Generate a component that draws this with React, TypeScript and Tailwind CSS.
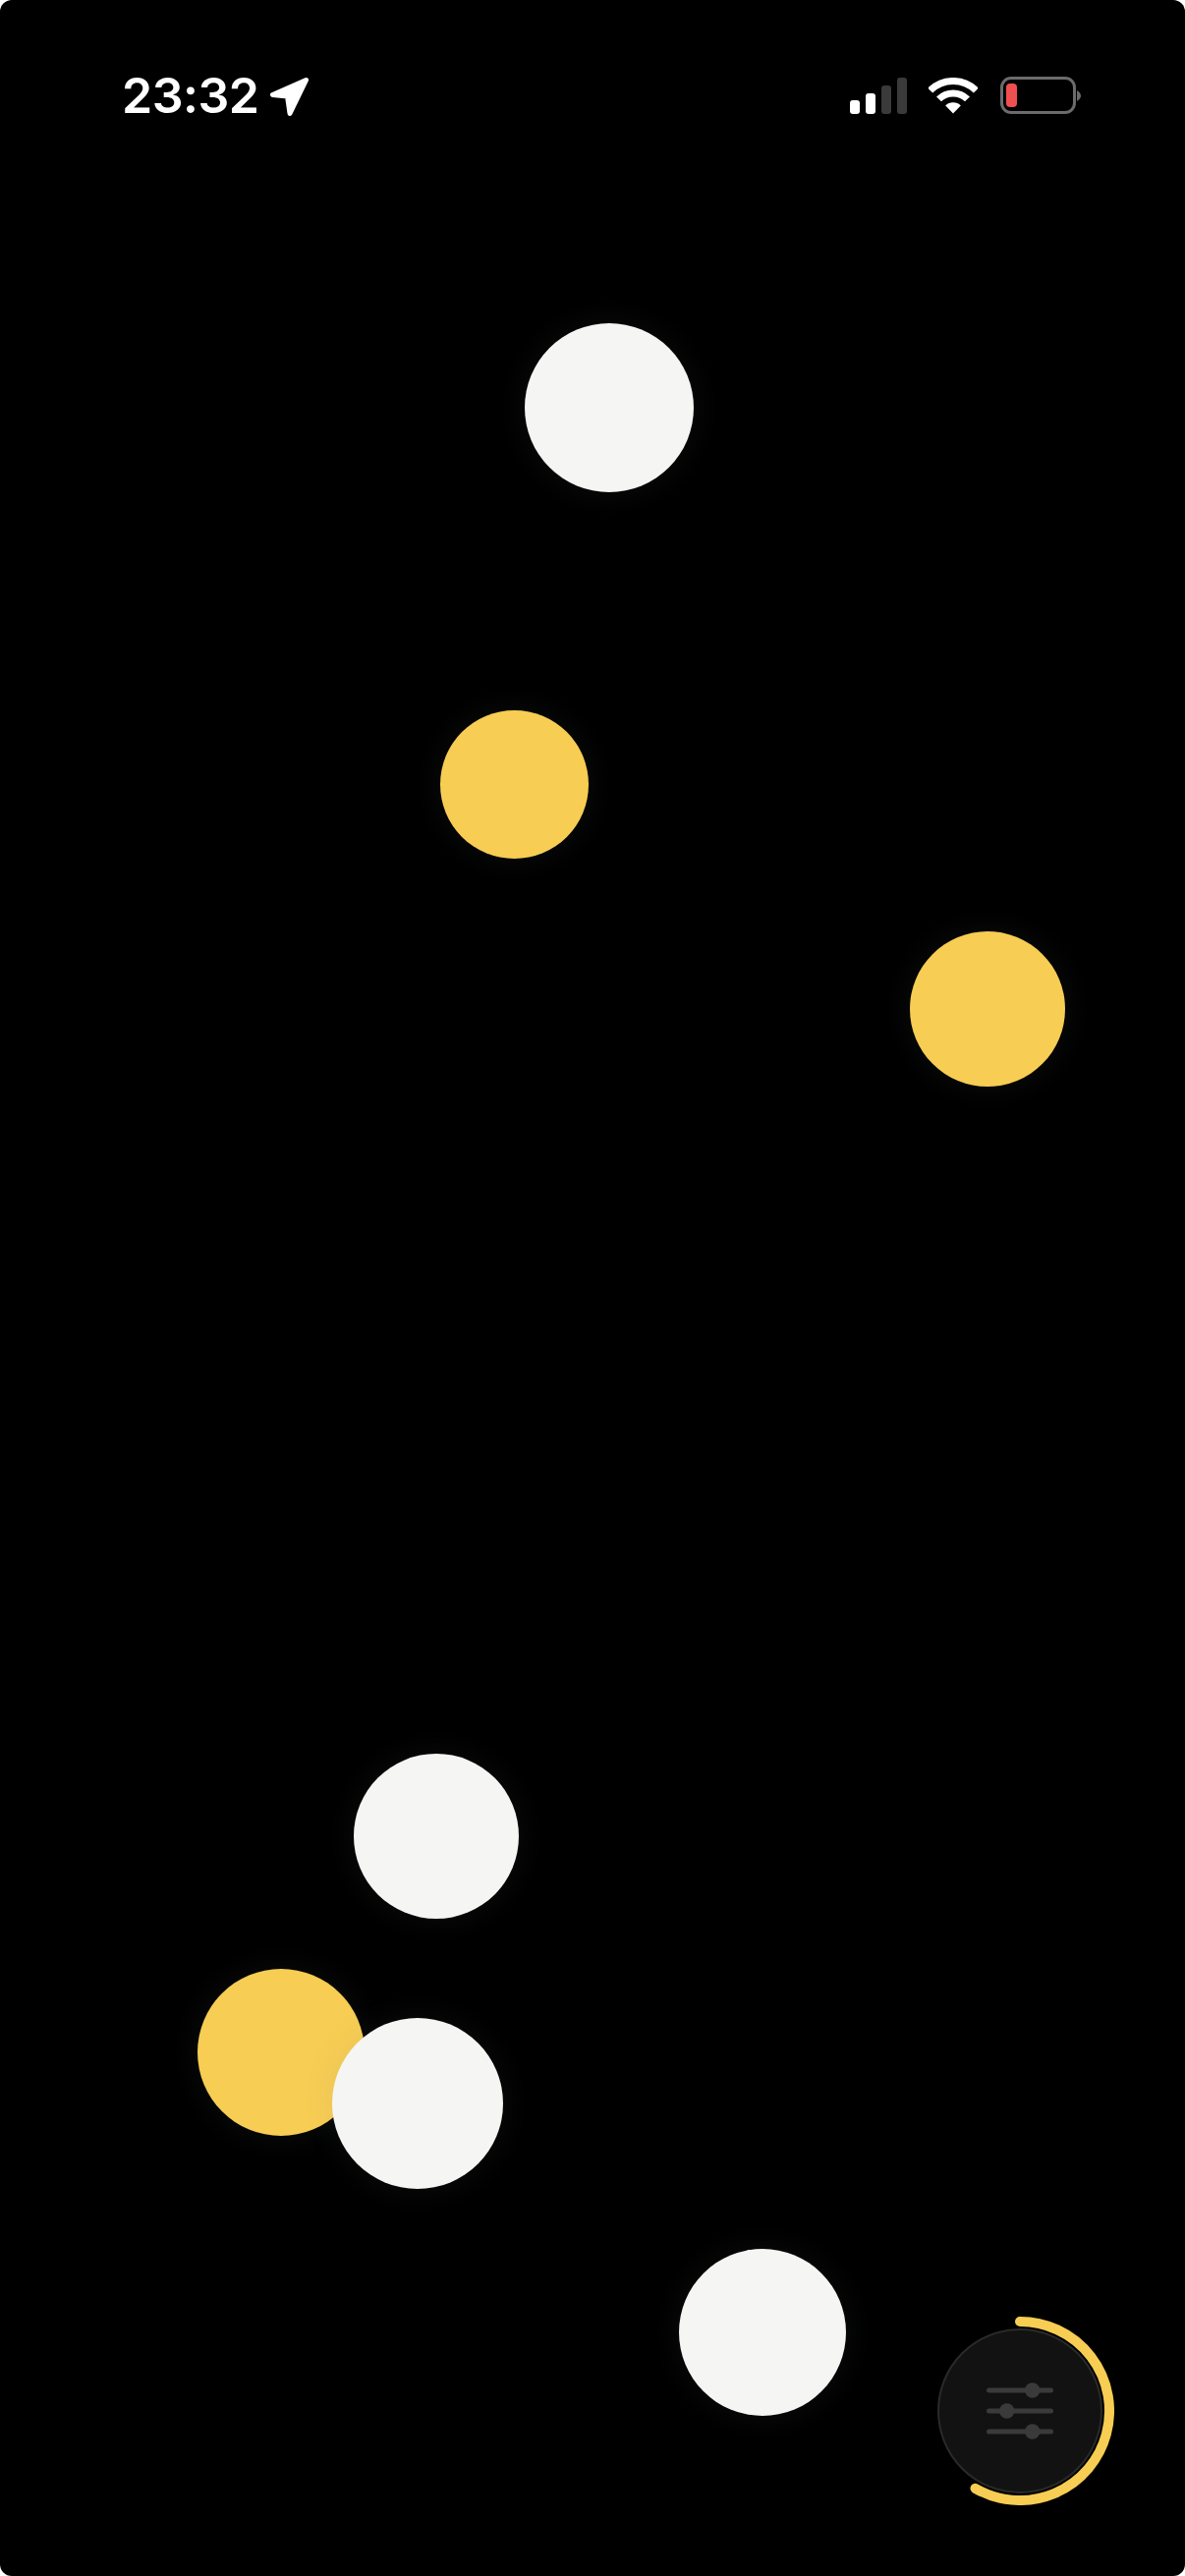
// App.tsx — floating dots screen with status bar and settings button
const DOTS = [
  { id: "w1", className: "left-[534px] top-[329px] h-[172px] w-[172px] bg-[#f5f5f3]" },
  { id: "y1", className: "left-[448px] top-[723px] h-[151px] w-[151px] bg-[#f7cd53]" },
  { id: "y2", className: "left-[926px] top-[948px] h-[158px] w-[158px] bg-[#f7cd53]" },
  { id: "w2", className: "left-[360px] top-[1785px] h-[168px] w-[168px] bg-[#f5f5f3]" },
  { id: "y3", className: "left-[201px] top-[2004px] h-[170px] w-[170px] bg-[#f7cd53]" },
  { id: "w3", className: "left-[338px] top-[2054px] h-[174px] w-[174px] bg-[#f5f5f3]" },
  { id: "w4", className: "left-[691px] top-[2289px] h-[170px] w-[170px] bg-[#f5f5f3]" },
];

function LocationArrow() {
  return (
    <svg width="39" height="39" viewBox="0 0 39 39" className="mt-px">
      <path
        d="M36.5 2.5 L2.5 17.5 L17.5 19 L20 36.5 Z"
        fill="#fff"
        stroke="#fff"
        strokeWidth="5"
        strokeLinejoin="round"
      />
    </svg>
  );
}

function Signal() {
  return (
    <div className="flex h-[37px] items-end gap-[6px]">
      <div className="h-[14px] w-[10px] rounded-[3px] bg-white" />
      <div className="h-[21px] w-[10px] rounded-[3px] bg-white" />
      <div className="h-[29px] w-[10px] rounded-[3px] bg-[#3a3a3a]" />
      <div className="h-[37px] w-[10px] rounded-[3px] bg-[#3a3a3a]" />
    </div>
  );
}

function Wifi() {
  return (
    <svg width="50" height="37" viewBox="0 0 50 37" fill="none">
      <path d="M1.7 13.1 A33 33 0 0 1 48.3 13.1" stroke="#fff" strokeWidth="7" />
      <path d="M10.5 21.9 A20.5 20.5 0 0 1 39.5 21.9" stroke="#fff" strokeWidth="7" />
      <path d="M25 36.4 L17.2 28.6 A11 11 0 0 1 32.8 28.6 Z" fill="#fff" />
    </svg>
  );
}

function Battery() {
  return (
    <div className="ml-px flex items-center gap-[1px]">
      <div className="flex h-[38px] w-[77px] items-center rounded-[11px] border-[3px] border-[#6b6b6b] pl-[3px]">
        <div className="h-[24px] w-[11px] rounded-[4px] bg-[#ef4f4f]" />
      </div>
      <svg width="4" height="11" viewBox="0 0 4 11">
        <path d="M0 0 C2.5 1.5 4 3.5 4 5.5 C4 7.5 2.5 9.5 0 11 Z" fill="#6b6b6b" />
      </svg>
    </div>
  );
}

function SettingsButton() {
  return (
    <div className="absolute left-[942px] top-[2358px] flex h-[192px] w-[192px] items-center justify-center">
      <svg width="192" height="192" viewBox="0 0 192 192" fill="none" className="absolute inset-0">
        <path
          d="M96 5 A91 91 0 1 1 50.5 174.8"
          stroke="#f7cd53"
          strokeWidth="10"
          strokeLinecap="round"
        />
      </svg>
      <button className="flex h-[168px] w-[168px] items-center justify-center rounded-full border-2 border-[#2a2a28] bg-[#121212]">
        <svg width="68" height="58" viewBox="0 0 68 58" fill="none">
          <path d="M2.5 8 H65.5 M2.5 29 H65.5 M2.5 50 H65.5" stroke="#3a3a3a" strokeWidth="5" strokeLinecap="round" />
          <circle cx="46.7" cy="8" r="7.7" fill="#3a3a3a" />
          <circle cx="20.7" cy="29" r="7.7" fill="#3a3a3a" />
          <circle cx="46.7" cy="50" r="7.7" fill="#3a3a3a" />
        </svg>
      </button>
    </div>
  );
}

export default function App() {
  return (
    <div className="h-[2622px] w-[1206px] bg-white">
      <main className="relative h-full w-full overflow-hidden rounded-[12px] bg-black">
        {/* Status bar */}
        <header className="flex items-start justify-between pl-[124px] pr-[106px] pt-[78px]">
          <div className="flex items-start gap-[12px]">
            <span className="h-[38px] text-[50px] font-semibold leading-[38px] tracking-[-0.5px] text-white [font-family:Inter,sans-serif]">
              23:32
            </span>
            <LocationArrow />
          </div>
          <div className="flex items-center gap-[22px]">
            <Signal />
            <Wifi />
            <Battery />
          </div>
        </header>

        {/* Dots */}
        {DOTS.map((d) => (
          <div
            key={d.id}
            className={`absolute rounded-full shadow-[0_0_32px_rgba(120,125,135,0.11)] ${d.className}`}
          />
        ))}

        <SettingsButton />
      </main>
    </div>
  );
}
